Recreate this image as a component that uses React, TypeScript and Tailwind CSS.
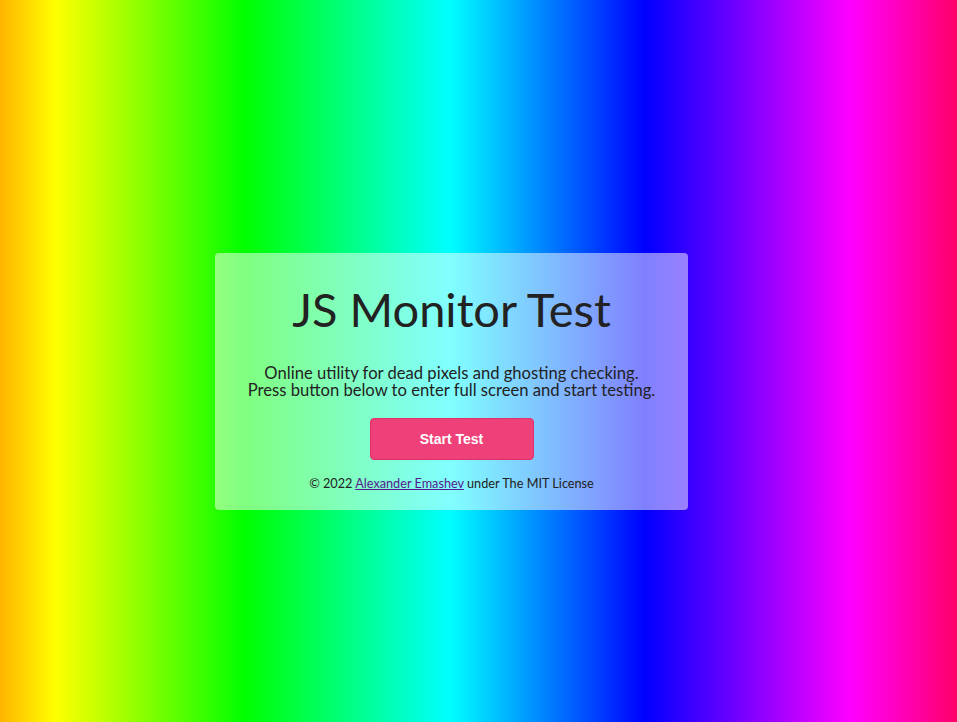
export default function App() {
  return (
    <div
      className="h-[722px] w-full overflow-hidden pl-[215px] pt-[253px] font-['Lato','Noto_Sans',sans-serif] text-[#222]"
      style={{
        background:
          'linear-gradient(to right, #ffb400 0%, #ffff00 5.8%, #00ff00 25.6%, #00ffff 47%, #0000ff 67.4%, #ff00ff 89%, #ff006a 100%)',
      }}
    >
      <div className="flex w-[473px] flex-col items-center rounded bg-white/50 pt-[28px] pb-[19px]">
        <h1 className="text-[47px] leading-[56px]">JS Monitor Test</h1>
        <p className="mt-[28px] text-center text-[16.6px] leading-[17px]">
          Online utility for dead pixels and ghosting checking.
          <br />
          Press button below to enter full screen and start testing.
        </p>
        <button className="mt-[19px] h-[42px] w-[164px] rounded border border-[#e0306a] bg-[#ef4179] font-['Liberation_Sans',Arial,sans-serif] text-[14px] font-bold text-white">
          Start Test
        </button>
        <p className="mt-[15px] text-[12.7px] leading-[16px]">
          © 2022{' '}
          <a href="#" className="text-[#551a8b] underline">
            Alexander Emashev
          </a>{' '}
          under The MIT License
        </p>
      </div>
    </div>
  );
}
